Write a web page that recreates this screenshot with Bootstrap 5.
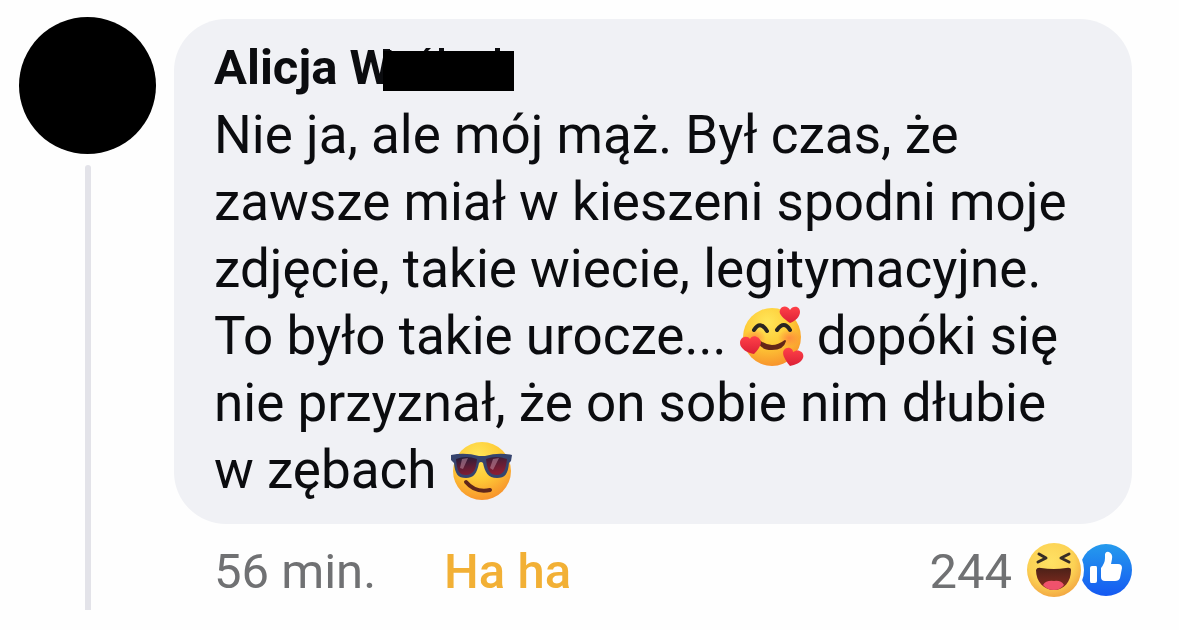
<!DOCTYPE html>
<html lang="pl">
<head>
<meta charset="utf-8">
<meta name="viewport" content="width=device-width, initial-scale=1">
<title>Komentarz</title>
<link href="https://cdn.jsdelivr.net/npm/bootstrap@5.3.0/dist/css/bootstrap.min.css" rel="stylesheet">
<style>
  body { font-family: Roboto, "Liberation Sans", sans-serif; color: #0b0c0f; background: #fefefe; }
  .comment { padding: 17px 47px 18px 19px; gap: 17px; }
  .thread { width: 138px; gap: 11px; }
  .avatar { width: 137px; height: 137px; background: #000; }
  .thread-line { width: 6px; background: #e3e3e9; border-radius: 3px 3px 0 0; margin-left: 66px; }
  .bubble { background: #f0f1f5; border-radius: 52px; padding: 15px 36px 20px 40px; margin-top: 2px; }
  .author { font-size: 49px; line-height: 68px; font-weight: 700; }
  .author a { color: inherit; }
  .redacted { width: 131px; height: 47px; margin-left: -9px; }
  .message { font-size: 53px; line-height: 67px; }
  .emoji { width: 64px; height: 64px; vertical-align: -15px; }
  .meta { font-size: 49px; line-height: 60px; color: #707173; padding: 18px 0 8px 40px; }
  .reaction-link { color: #f2b035; font-weight: 500; margin-left: 68px; }
  .reactions { gap: 14px; }
  .reaction-icons { width: 106px; height: 54px; margin-bottom: 4px; }
</style>
</head>
<body>
<article class="comment d-flex align-items-stretch">
  <div class="thread d-flex flex-column align-items-start flex-shrink-0">
    <div class="avatar rounded-circle flex-shrink-0"></div>
    <div class="thread-line flex-grow-1"></div>
  </div>
  <div class="flex-grow-1">
    <div class="bubble">
      <h1 class="author mb-0 d-flex align-items-center"><a href="#" class="text-decoration-none">Alicja W</a><svg class="redacted" viewBox="0 0 131 47" aria-hidden="true"><path d="M0 7V4H7V7M40 7L43 3H48L44 7M56 3H61V7H56M112 3H117V7H112" fill="#0b0c0f"/><path d="M0 6H131V46H0Z"/></svg></h1>
      <p class="message mb-0">Nie ja, ale mój mąż. Był czas, że<br>zawsze miał w kieszeni spodni moje<br>zdjęcie, takie wiecie, legitymacyjne.<br>To było takie urocze...
        <svg class="emoji" viewBox="0 0 64 64" role="img" aria-label="Uśmiechnięta buźka z serduszkami">
          <defs>
            <radialGradient id="face" cx=".42" cy=".25" r=".8"><stop offset="0" stop-color="#ffe75a"/><stop offset=".5" stop-color="#fecb36"/><stop offset="1" stop-color="#f78d2b"/></radialGradient>
            <radialGradient id="blush"><stop offset="0" stop-color="#ff7041" stop-opacity=".65"/><stop offset="1" stop-color="#ff7041" stop-opacity="0"/></radialGradient>
            <linearGradient id="heart" x2="0" y2="1"><stop stop-color="#ff4148"/><stop offset="1" stop-color="#dc2036"/></linearGradient>
          </defs>
          <circle cx="32" cy="32" r="29" fill="url(#face)"/>
          <ellipse cx="15" cy="33" rx="11" ry="9" fill="url(#blush)"/><ellipse cx="49" cy="33" rx="11" ry="9" fill="url(#blush)"/>
          <path d="M14 25Q20 15 27 26M37 25Q44 15 50 25" fill="none" stroke="#292522" stroke-width="4" stroke-linecap="round"/>
          <path d="M19 36Q32 46 45 36Q43 44 32 44Q21 44 19 36Z" fill="#642718" stroke="#642718" stroke-width="2" stroke-linejoin="round"/>
          <g fill="url(#heart)">
            <path d="M50 18C44 14 38 9 40 5C42 0 48 1 50 5C53 0 60 1 60 7C60 12 55 16 50 18Z"/>
            <path d="M14 49C8 48 0 44 0 38C0 31 8 30 10 34C12 29 20 31 21 37C21 41 17 46 14 49Z"/>
            <path d="M50 61C46 56 41 49 44 45C47 41 53 43 53 47C58 43 65 47 63 53C61 58 55 60 50 61Z"/>
          </g>
        </svg>
        dopóki się<br>nie przyznał, że on sobie nim dłubie<br>w zębach
        <svg class="emoji" viewBox="0 0 64 64" role="img" aria-label="Buźka w okularach przeciwsłonecznych">
          <defs>
            <linearGradient id="lens" x1=".1" x2=".5" y2="1"><stop stop-color="#241c38"/><stop offset=".5" stop-color="#5b1d35"/><stop offset="1" stop-color="#891d34"/></linearGradient>
          </defs>
          <circle cx="32" cy="32" r="29" fill="url(#face)"/>
          <path d="M1 16Q15 13 29 17H35Q49 13 62 16L61 22L59 24C58 35 55 39 47 39C38 39 35 33 33 24Q31 22 29 24C27 34 24 39 16 39C8 39 5 35 4 24L1 21Z" fill="#36446e"/>
          <path d="M6 20Q16 16 27 20C26 31 23 36 16 36C9 36 7 32 6 20ZM36 20Q46 16 57 20C56 31 53 36 47 36C39 36 37 30 36 20Z" fill="url(#lens)"/>
          <path d="M12 20L18 19L13 30L10 29ZM43 20L49 19L43 31L40 29Z" fill="#c996aa" opacity=".5"/>
          <path d="M16 43Q25 54 40 51" fill="none" stroke="#60271b" stroke-width="4" stroke-linecap="round"/>
        </svg></p>
    </div>
    <footer class="meta d-flex align-items-center">
      <time>56 min.</time>
      <a href="#" class="reaction-link text-decoration-none">Ha ha</a>
      <div class="reactions d-flex align-items-center ms-auto">
        <span>244</span>
        <svg class="reaction-icons" viewBox="0 0 106 54" role="img" aria-label="Ha ha i Lubię to">
          <defs>
            <linearGradient id="like" x2="0" y2="1"><stop stop-color="#259bed"/><stop offset="1" stop-color="#1559f2"/></linearGradient>
            <radialGradient id="laugh" cx=".45" cy=".35" r=".65"><stop offset="0" stop-color="#ffe164"/><stop offset=".65" stop-color="#fcd254"/><stop offset="1" stop-color="#f3a943"/></radialGradient>
            <linearGradient id="mouth" x2="0" y2="1"><stop stop-color="#4b2118"/><stop offset="1" stop-color="#8b2d20"/></linearGradient>
          </defs>
          <circle cx="80" cy="27" r="26" fill="url(#like)"/>
          <circle cx="28" cy="27" r="30" fill="#fefefe"/>
          <circle cx="28" cy="27" r="27" fill="url(#laugh)"/>
          <path d="M13 11L20 15L12 19M43 11L35 15L43 19" fill="none" stroke="#382d26" stroke-width="3" stroke-linecap="round" stroke-linejoin="round"/>
          <path d="M10 27Q11 24 15 25Q28 27 40 25Q45 24 45 27C45 39 38 47 28 47C18 47 10 39 10 27Z" fill="url(#mouth)"/>
          <path d="M17 42Q20 37 28 38Q35 37 38 42Q34 47 28 47Q21 47 17 42Z" fill="#f0526c"/>
          <path d="M66 23H70Q71 23 71 25V38Q71 40 69 40H65Q64 40 64 38V25Q64 23 66 23Z" fill="#fff"/>
          <path d="M75 25Q79 20 79 15V11Q80 8 83 9Q87 11 86 16L85 21H92Q96 21 96 25L94 35Q93 38 89 38H79Q75 38 75 34Z" fill="#fff"/>
        </svg>
      </div>
    </footer>
  </div>
</article>
<script src="https://cdn.jsdelivr.net/npm/bootstrap@5.3.0/dist/js/bootstrap.bundle.min.js"></script>
</body>
</html>
